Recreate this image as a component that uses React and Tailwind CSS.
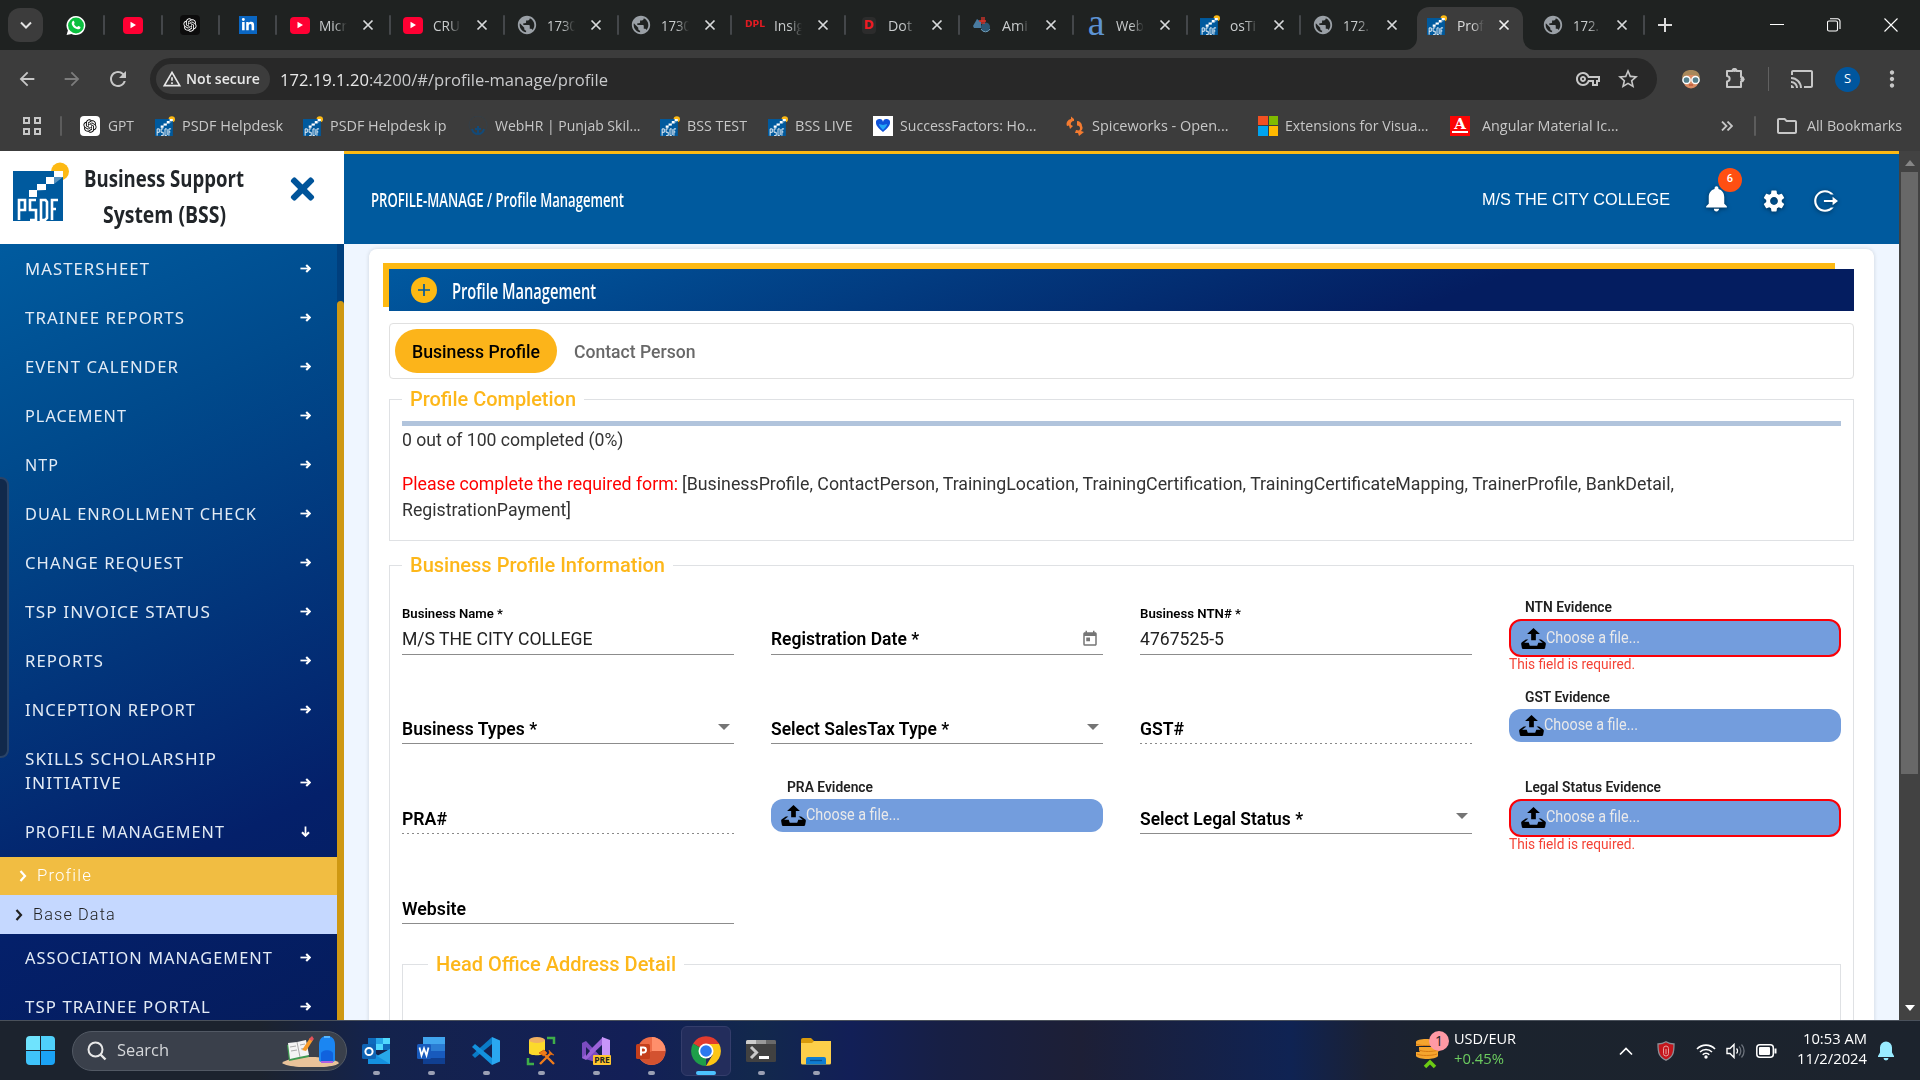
import { useLayoutEffect, useRef } from "react";
import { FaWhatsapp, FaLinkedinIn, FaTimes } from "react-icons/fa";
import {
  MdPublic, MdNotifications, MdSettings, MdToday, MdOutlineExtension, MdCast,
  MdStarOutline, MdOutlineVpnKey, MdMoreVert, MdOutlineFolder, MdRefresh,
  MdArrowBack, MdArrowForward, MdOutlineWarningAmber,
} from "react-icons/md";
import { RiOpenaiFill, RiLogoutCircleRLine } from "react-icons/ri";

/* Text squeezed or stretched horizontally to a given width. */
function Fit({ w, className = "", children }) {
  const inner = useRef(null);
  useLayoutEffect(() => {
    const el = inner.current;
    el.style.transform = "none";
    const natural = el.getBoundingClientRect().width;
    if (natural) el.style.transform = `scaleX(${w / natural})`;
  }, [w]);
  return (
    <span className={"inline-block shrink-0 whitespace-nowrap " + className} style={{ width: w }}>
      <span ref={inner} className="inline-block origin-left">{children}</span>
    </span>
  );
}

function Psdf({ className = "h-5 w-5" }) {
  return (
    <svg viewBox="0 0 56 59" preserveAspectRatio="none" className={"shrink-0 " + className}>
      <circle cx="47" cy="9.5" r="9" fill="#fdb913" />
      <rect x="0" y="9" width="50" height="50" fill="#005a9e" />
      <path d="M41 9h9v6h-9zM33 15h8v7h-8zM24 22h9v6h-9zM16 28h8v7h-8z" fill="#fff" />
      <path d="M50 9v6l-9 7v-7l-8 7v6l-9 1v5l-8 1v-1l8-6v-1l9-5v-2l8-5z" fill="#fff" opacity=".35" />
      <g fill="none" stroke="#fff" strokeWidth="2.6">
        <path d="M6 58V38h6v10H6M23 38h-6v10h6v10h-6M28 58V38h4.500l1.500 2v16l-2 2zM39 58V38h6M39 47h4" />
      </g>
    </svg>
  );
}

function Yt() {
  return (
    <span className="flex h-[17px] w-5 shrink-0 items-center justify-center rounded bg-[#ff0033]">
      <svg viewBox="0 0 8 8" className="h-2 w-2"><path d="M1.500 .8L7 4 1.500 7.200z" fill="#fff" /></svg>
    </span>
  );
}
const Globe = () => <MdPublic className="h-[22px] w-[22px] shrink-0 -ml-px text-[#9aa0a6]" />;
const Dpl = () => (
  <span className="flex h-5 w-5 items-center font-['DejaVu_Sans'] text-[9px] font-bold text-[#e11b22]"><Fit w={20}>DPL</Fit></span>
);
const Dot = () => (
  <span className="flex h-[17px] w-5 items-center justify-center">
    <span className="flex h-[17px] w-3.5 items-center justify-center rounded-sm bg-[#2c2c2c] font-['DejaVu_Sans'] text-[12px] font-bold text-[#f01b23]">D</span>
  </span>
);
const Rig = () => (
  <svg viewBox="0 0 20 20" className="h-5 w-5">
    <path d="M1 11l4-7 4 3v6H2z" fill="#4a7ba0" /><circle cx="13.500" cy="12" r="4.500" fill="#2d5673" />
    <path d="M10 2v7M12 2v7M7 6h7" stroke="#e0352b" strokeWidth="1.300" /><path d="M9 14a5 5 0 009 0" stroke="#6fa0bd" fill="none" />
  </svg>
);
const BlueA = () => (
  <span className="flex h-5 w-5 items-center justify-center pb-[7px] font-['Liberation_Serif'] text-[38px] leading-none text-[#5d93d3]">a</span>
);

function Sep() {
  return <span className="h-5 w-0.5 shrink-0 rounded-sm bg-[#44474a]" />;
}

function Tab({ icon, text, tw, sep = true }) {
  return (
    <div className="flex h-[50px] w-[113.8px] shrink-0 items-center">
      <span className="flex w-[21px] justify-center ml-3">{icon}</span>
      <span className="ml-[9px] flex w-[28px] text-[15px] text-[#c9cccd] [mask-image:linear-gradient(to_right,black_55%,transparent)]"><Fit w={tw}>{text}</Fit></span>
      <X className="ml-[15px] text-[#d8dadb]" />
      <span className="flex-1" />
      {sep && <Sep />}
    </div>
  );
}
function X({ className = "" }) {
  return (
    <svg viewBox="0 0 12 12" className={"h-3 w-3 shrink-0 " + className}>
      <path d="M1.500 1.500l9 9M10.500 1.500l-9 9" stroke="currentColor" strokeWidth="1.700" />
    </svg>
  );
}
function Pinned({ children }) {
  return (
    <div className="flex h-[50px] w-[57.3px] shrink-0 items-center">
      <div className="flex flex-1 justify-center">{children}</div>
      <Sep />
    </div>
  );
}

function TabStrip() {
  return (
    <div className="flex h-[50px] shrink-0 items-center bg-[#1f2221] font-['Open_Sans']">
      <span className="ml-2 flex h-[34px] w-[35px] shrink-0 items-center justify-center rounded-xl bg-[#3c3c3c]">
        <svg viewBox="0 0 12 8" className="h-2 w-3"><path d="M1 1.500l5 5 5-5" fill="none" stroke="#e3e3e3" strokeWidth="2" /></svg>
      </span>
      <div className="ml-[5px] flex items-center">
        <Pinned>
          <svg viewBox="0 0 20 20" className="h-[21px] w-5"><path d="M10 .5a9.500 9.500 0 11-4.600 17.900L.6 19.600l1.300-4.700A9.500 9.500 0 0110 .5z" fill="#fff" /><circle cx="10" cy="10" r="7.900" fill="#0bbf3f" /><path d="M6.800 5.500c.8-.6 1.200 0 1.800 1.700.2.600-.7 1-.6 1.400.6 1.300 1.600 2.300 3 2.900.5.200 1-1.100 1.500-.9 2 .9 2.200 1 1.900 1.900-.5 1.400-2.300 1.600-3.600 1.100-2.700-.9-4.300-2.800-5-4.900-.3-1 .1-2.500 1-3.200z" fill="#fff" /></svg>
        </Pinned>
        <Pinned><Yt /></Pinned>
        <Pinned><span className="flex h-5 w-5 items-center justify-center rounded bg-[#0c0c0c]"><RiOpenaiFill className="h-4 w-4 text-white" /></span></Pinned>
        <Pinned><span className="flex h-[18px] w-[18px] items-center justify-center bg-[#0a66c2]"><FaLinkedinIn className="h-3.5 w-3.5 text-white" /></span></Pinned>
      </div>
      <Tab icon={<Yt />} text="Micr" tw={28} />
      <Tab icon={<Yt />} text="CRU" tw={27} />
      <Tab icon={<Globe />} text="1730" tw={30} />
      <Tab icon={<Globe />} text="1730" tw={30} />
      <Tab icon={<Dpl />} text="Insig" tw={30} />
      <Tab icon={<Dot />} text="Dot" tw={24} />
      <Tab icon={<Rig />} text="Ami" tw={26} />
      <Tab icon={<BlueA />} text="Web" tw={28} />
      <Tab icon={<Psdf />} text="osTi" tw={26} />
      <Tab icon={<Globe />} text="172." tw={26} sep={false} />
      <div className="-ml-[11px] flex h-[50px] w-[134px] shrink-0 items-end">
        <svg viewBox="0 0 12 12" className="ml-[1px] h-3 w-3 shrink-0"><path d="M12 0v12H0A12 12 0 0012 0z" fill="#3c3c3c" /></svg>
        <div className="flex h-[43px] w-[106px] items-center rounded-t-xl bg-[#3c3c3c] pb-[7px] pl-[10px]">
          <Psdf />
          <span className="ml-2.5 flex w-[27px] text-[15px] text-[#dcdcdc] [mask-image:linear-gradient(to_right,black_55%,transparent)]"><Fit w={27}>Prof</Fit></span>
          <X className="ml-[14px] text-[#f0f0f0]" />
        </div>
        <svg viewBox="0 0 12 12" className="h-3 w-3 shrink-0"><path d="M0 0v12h12A12 12 0 010 0z" fill="#3c3c3c" /></svg>
      </div>
      <div className="-ml-[7px]"><Tab icon={<Globe />} text="172." tw={26} /></div>
      <svg viewBox="0 0 14 14" className="ml-[13px] h-3.5 w-3.5 shrink-0"><path d="M7 0v14M0 7h14" stroke="#dcdcdc" strokeWidth="2" /></svg>
      <div className="ml-auto flex items-center gap-[43px] pr-[22px] text-white">
        <svg viewBox="0 0 14 14" className="h-3.5 w-3.5"><path d="M0 6.500h14" stroke="currentColor" strokeWidth="1" /></svg>
        <svg viewBox="0 0 14 14" className="h-3.5 w-3.5"><path d="M.5 4.500a1.500 1.500 0 011.500-1.500h7a1.500 1.500 0 011.500 1.500v7a1.500 1.500 0 01-1.500 1.500H2a1.500 1.500 0 01-1.500-1.500zM3 .8h7.500a2.500 2.500 0 012.500 2.500V11" fill="none" stroke="currentColor" strokeWidth="1.100" /></svg>
        <svg viewBox="0 0 14 14" className="h-3.5 w-3.5"><path d="M.5.5l13 13M13.500.5l-13 13" stroke="currentColor" strokeWidth="1.100" /></svg>
      </div>
    </div>
  );
}

function Toolbar() {
  return (
    <div className="flex h-[58px] shrink-0 items-center bg-[#3c3c3c] font-['Open_Sans'] text-[#c7c7c7]">
      <MdArrowBack className="ml-4 h-[22px] w-[22px] shrink-0" />
      <MdArrowForward className="ml-[23px] h-[22px] w-[22px] shrink-0 text-[#7c7c7c]" />
      <MdRefresh className="ml-[23px] h-6 w-6 shrink-0" />
      <div className="ml-[20px] flex h-[42px] w-[1507px] shrink-0 items-center rounded-full bg-[#282828] pl-1.5">
        <div className="flex h-[30px] w-[114px] items-center rounded-full bg-[#3c3c3c] pl-1.5 text-[15px] font-semibold text-[#e8e8e8]">
          <MdOutlineWarningAmber className="h-5 w-5" />
          <Fit w={74} className="ml-[4px] -mt-px">Not secure</Fit>
        </div>
        <Fit w={328} className="ml-[10px] mt-px text-[17px] text-[#c9cacc]"><span className="text-[#e8e8e8]">172.19.1.20</span>:4200/#/profile-manage/profile</Fit>
        <MdOutlineVpnKey className="ml-auto h-6 w-6" />
        <MdStarOutline className="ml-[16px] mr-[17px] h-6 w-6" />
      </div>
      <svg viewBox="0 0 20 20" className="ml-[24px] h-5 w-5 shrink-0">
        <ellipse cx="10" cy="11" rx="8" ry="8.500" fill="#d98b62" /><path d="M1 10C1 3 5 1 10 1s9 2 9 9c-2-3-4-4-9-4s-7 1-9 4z" fill="#a8885a" />
        <circle cx="5.500" cy="11" r="3.600" fill="#55808c" stroke="#fff" strokeWidth="1.500" /><circle cx="14.500" cy="11" r="3.600" fill="#55808c" stroke="#fff" strokeWidth="1.500" />
        <path d="M8 16h4" stroke="#b0402b" />
      </svg>
      <svg viewBox="0 0 22 22" className="ml-[23px] mt-[-2px] h-[22px] w-[22px] shrink-0"><path d="M3 4h5.500a2 2 0 014 0H17v6a2 2 0 010 4.500V20H3v-5.500c3.500-.5 3.500-5 0-5.500z" fill="none" stroke="#c7c7c7" strokeWidth="2" strokeLinejoin="round" /><circle cx="10.500" cy="3" r="2" fill="#c7c7c7" /><circle cx="18.500" cy="12.200" r="2" fill="#c7c7c7" /></svg>
      <span className="ml-[22px] h-6 w-px shrink-0 bg-[#616161]" />
      <MdCast className="ml-[21px] h-6 w-6 shrink-0" />
      <span className="ml-[21px] flex h-[25px] w-[25px] shrink-0 items-center justify-center rounded-full bg-[#00569e] text-[13px] text-white">S</span>
      <MdMoreVert className="ml-[19px] h-[26px] w-[26px] shrink-0" />
    </div>
  );
}

const Spice = () => (
  <svg viewBox="0 0 20 20" className="h-5 w-5"><path d="M9 3L6 .5V3a5 5 0 00-4 7l2-.5 1 3.500 3-3-2-1a3 3 0 013-4zM12 5a5 5 0 015 5 4 4 0 01-1 5l3 1-5 4-1-3h-3l1-3 3 .5c2-2 1-5-2-5z" fill="#f47b30" /></svg>
);
const bookmarks = [
  ["GPT", 75, 26, "ml-[7.5px]", <span className="flex h-5 w-5 items-center justify-center rounded-sm bg-white"><RiOpenaiFill className="h-4 w-4 text-black" /></span>],
  ["PSDF Helpdesk", 148, 101, "ml-[6.5px]", <Psdf />],
  ["PSDF Helpdesk ip", 165, 116.5, "ml-[6.5px]", <Psdf />],
  ["WebHR | Punjab Skil...", 192, 145.5, "ml-[6.5px]", <svg viewBox="0 0 20 20" className="h-5 w-5"><circle cx="10" cy="9" r="9" fill="none" stroke="#353f47" /><path d="M10 10v8M4 13c1 4 3 5 6 5s5-1 6-5M7 13h6" stroke="#134a78" strokeWidth="2" fill="none" /></svg>],
  ["BSS TEST", 108, 60, "ml-[7px]", <Psdf />],
  ["BSS LIVE", 105, 57.5, "ml-[6.5px]", <Psdf />],
  ["SuccessFactors: Ho...", 192, 136.5, "ml-[6.5px]", <span className="flex h-5 w-5 items-center justify-center bg-white"><svg viewBox="0 0 16 16" className="h-4 w-4"><path d="M8 14C3 10 1 7 1 5a3.500 3.500 0 017-1 3.500 3.500 0 017 1c0 2-2 5-7 9z" fill="#0f52d9" /><path d="M8 12C6 10 4 8 4 6l4 1 4-1c0 2-2 4-4 6z" fill="#25a6f5" /></svg></span>],
  ["Spiceworks - Open...", 193, 136.5, "ml-[6.5px]", <Spice />],
  ["Extensions for Visua...", 192, 143.5, "ml-[6.5px]", <span className="grid h-5 w-5 grid-cols-2 gap-px"><i className="bg-[#f25022]" /><i className="bg-[#7fba00]" /><i className="bg-[#00a4ef]" /><i className="bg-[#ffb900]" /></span>],
  ["Angular Material Ic...", 190, 136.5, "ml-[11.5px]", <span className="flex h-5 w-5 flex-col items-center justify-center bg-[#fb0505] font-['DejaVu_Serif'] text-[15px] font-bold leading-[13px] text-white">A<i className="h-0.5 w-4 bg-white" /></span>],
];

function Bookmarks() {
  return (
    <div className="flex h-[43px] shrink-0 items-center bg-[#3c3c3c] pb-[8px] pt-0 font-['Open_Sans'] text-[14.5px] text-[#c7c7c7]">
      <svg viewBox="0 0 18 18" className="ml-[23px] h-[18px] w-[18px] shrink-0"><path d="M1 1h5v5H1zM12 1h5v5h-5zM1 12h5v5H1zM12 12h5v5h-5z" fill="none" stroke="#c7c7c7" strokeWidth="2" /></svg>
      <span className="ml-[19px] mr-[18px] h-5 w-0.5 shrink-0 rounded bg-[#5c5c5c]" />
      {bookmarks.map(([name, w, tw, gap, icon]) => (
        <div key={name} className="flex shrink-0 items-center" style={{ width: w }}>
          <span className="flex w-5 shrink-0">{icon}</span>
          <Fit w={tw} className={gap}>{name}</Fit>
        </div>
      ))}
      <svg viewBox="0 0 12 10" className="ml-[81px] h-2.5 w-3 shrink-0"><path d="M1 .5L5.500 5 1 9.500M6.500 .5L11 5 6.500 9.500" fill="none" stroke="#c7c7c7" strokeWidth="1.800" /></svg>
      <span className="ml-[21px] h-5 w-0.5 shrink-0 rounded bg-[#5c5c5c]" />
      <MdOutlineFolder className="ml-[19px] h-6 w-6 shrink-0" />
      <Fit w={95} className="ml-[8px]">All Bookmarks</Fit>
    </div>
  );
}

const menuTop = [
  [["MASTERSHEET", 125]], [["TRAINEE REPORTS", 160]], [["EVENT CALENDER", 154]], [["PLACEMENT", 102]], [["NTP", 34]],
  [["DUAL ENROLLMENT CHECK", 232]], [["CHANGE REQUEST", 159]], [["TSP INVOICE STATUS", 186]], [["REPORTS", 79]],
  [["INCEPTION REPORT", 171]], [["SKILLS SCHOLARSHIP", 192], ["INITIATIVE", 97]],
];
const menuBottom = [[["ASSOCIATION MANAGEMENT", 248]], [["TSP TRAINEE PORTAL", 186]]];

function MenuItem({ lines, open }) {
  return (
    <div className="flex items-end justify-between pt-[11.5px] pb-[13.5px] pl-[25px] pr-[26px] font-['Noto_Sans'] text-[15.5px] tracking-[1px] text-[#e3ebf5]">
      <div className="flex flex-col">
        {lines.map(([t, w]) => <Fit key={t} w={w} className="h-6 leading-6">{t}</Fit>)}
      </div>
      <span className="flex h-6 items-center">
        <svg viewBox="0 0 12 12" className={"h-[11px] w-[11px] " + (open ? "rotate-90" : "")}>
          <path d="M.5 6h9" stroke="#fff" strokeWidth="1.900" /><path d="M6.800 2.200L10.600 6 6.800 9.800" fill="none" stroke="#fff" strokeWidth="2.300" />
        </svg>
      </span>
    </div>
  );
}
function Chev() {
  return <svg viewBox="0 0 8 12" className="h-3 w-2 shrink-0"><path d="M1.500 1l4.500 5-4.500 5" fill="none" stroke="currentColor" strokeWidth="2.200" /></svg>;
}

function Sidebar() {
  return (
    <aside className="relative flex h-full w-[344px] shrink-0 flex-col overflow-hidden">
      <div className="flex h-[93px] shrink-0 bg-white">
        <Psdf className="ml-[13px] mt-[11px] h-[59px] w-[56px]" />
        <div className="ml-[15px] mt-[9px] flex w-[160px] flex-col items-center font-['Open_Sans'] text-[24px] font-bold text-[#212529]">
          <Fit w={160} className="h-[35.5px] leading-[35.5px]">Business Support</Fit>
          <Fit w={123} className="h-[35.5px] leading-[35.5px]">System (BSS)</Fit>
        </div>
        <FaTimes className="ml-[42px] mt-[21px] h-[34px] w-[33px] text-[#00549a]" />
      </div>
      <div className="flex min-h-0 flex-1">
        <div className="w-[337px] overflow-hidden bg-[linear-gradient(155deg,#005b9f_0%,#004a8c_25%,#04206a_75%,#051c5c_100%)] pt-px">
          {menuTop.map((l) => <MenuItem key={l[0][0]} lines={l} />)}
          <MenuItem lines={[["PROFILE MANAGEMENT", 200]]} open />
          <div className="flex h-[38px] items-center bg-[#f1bd42] pl-[19px] font-['Roboto'] text-[17px] font-light tracking-[1.2px] text-white">
            <Chev /><Fit w={55} className="ml-[9.5px]">Profile</Fit>
          </div>
          <div className="flex h-[39px] items-center bg-[#c5d8ff] pl-[15px] font-['Roboto'] text-[17px] font-light tracking-[1.2px] text-[#222]">
            <Chev /><Fit w={83} className="ml-[9.5px]">Base Data</Fit>
          </div>
          {menuBottom.map((l) => <MenuItem key={l[0][0]} lines={l} />)}
        </div>
        <div className="w-[7px] bg-[#003f7d] pt-[57px]"><div className="h-full rounded-t bg-[#cf9812]" /></div>
      </div>
      <div className="absolute -left-1 top-[326px] h-[281px] w-[13px] rounded-r-lg border-2 border-[#2a4468] bg-[#11294b]" />
    </aside>
  );
}

function TopBar() {
  return (
    <div className="flex h-[93px] shrink-0 items-center border-t-[3px] border-[#fdb913] bg-[#005a9e] pl-[27px] text-white">
      <Fit w={253} className="mt-[2px] font-['Open_Sans'] text-[20px] font-semibold">PROFILE-MANAGE / Profile Management</Fit>
      <Fit w={188} className="ml-auto mt-[2px] font-['Liberation_Sans'] text-[17px]">M/S THE CITY COLLEGE</Fit>
      <div className="relative ml-[31px]">
        <MdNotifications className="h-[31px] w-[31px] -mt-[2px] drop-shadow-[0_1px_2px_rgba(0,0,0,0.5)]" />
        <span className="absolute left-[17px] -top-[17px] flex h-6 w-6 items-center justify-center rounded-full bg-[#ff4f12] font-['Roboto'] text-[11px] font-medium">6</span>
      </div>
      <MdSettings className="ml-[29px] h-[26px] w-[26px] mt-[4px] drop-shadow-[0_1px_2px_rgba(0,0,0,0.5)]" />
      <RiLogoutCircleRLine className="ml-[25px] mr-[61px] mt-[3px] h-[26px] w-[26px] drop-shadow-[0_1px_2px_rgba(0,0,0,0.5)]" />
    </div>
  );
}

function Field({ label, lw, value, vw, dotted, icon }) {
  return (
    <div className="flex h-full flex-col pt-[15px]">
      <div className="flex h-[17px] items-center text-[13.500px] font-semibold text-black">{value && <Fit w={lw}>{label}</Fit>}</div>
      <div className="flex h-[31.500px] items-center justify-between pt-[2px] text-[18px]">
        {value ? <Fit w={vw} className="text-[#222]">{value}</Fit> : <Fit w={lw} className="font-semibold text-black">{label}</Fit>}
        {icon}
      </div>
      {dotted ? (
        <div className="h-px bg-[repeating-linear-gradient(to_right,#8a8a8a_0,#8a8a8a_2px,transparent_2px,transparent_5px)]" />
      ) : <div className="h-px bg-[#8c8c8c]" />}
    </div>
  );
}
const Caret = () => <span className="mb-1 mr-[4px] border-x-[6.5px] border-t-[6.5px] border-x-transparent border-t-[#757575]" />;

function Upload({ label, lw, error }) {
  return (
    <div className="flex h-full flex-col pt-[8px]">
      <div className="flex h-[21px] items-center pb-px pl-4 text-[14.500px] font-semibold text-[#212121]"><Fit w={lw}>{label}</Fit></div>
      <div className={"flex shrink-0 items-center rounded-xl bg-[#739ddd] text-[16px] text-[#e9e9ea] " + (error ? "h-[38px] border-2 border-[#fb0007] pl-[10px]" : "h-[33px] pl-[10px]")}>
        <svg viewBox="0 0 20 17" className={"h-[21px] w-[25px] " + (error ? "" : "mt-px")} ><path d="M10 0l-5.200 4.900h3.300v5.100h3.800v-5.100h3.300l-5.200-4.900zm9.300 11.500l-3.200-2.100h-2l3.400 2.600h-3.500c-.1 0-.2.1-.2.1l-.8 2.300h-6l-.8-2.200c-.1-.1-.1-.2-.2-.2h-3.600l3.400-2.600h-2l-3.200 2.100c-.4.3-.7 1-.6 1.500l.6 3.100c.1.5.7.9 1.200.9h16.300c.6 0 1.100-.4 1.300-.9l.6-3.100c.1-.5-.2-1.200-.7-1.500z" /></svg>
        <Fit w={94} className="-mt-px">Choose a file...</Fit>
      </div>
      {error && <Fit w={126} className="h-[14px] text-[15px] leading-[14px] text-[#f44336]">This field is required.</Fit>}
    </div>
  );
}

function Group({ title, tw, className = "", legendClass = "", children }) {
  return (
    <fieldset className={"border border-[#dfe1e4] px-[12px] " + className}>
      <legend className={"flex h-[30px] items-center px-2 text-[20.500px] font-medium text-[#fdb71a] " + legendClass}><Fit w={tw} className="pt-px">{title}</Fit></legend>
      {children}
    </fieldset>
  );
}

function Content() {
  return (
    <div className="flex min-h-0 flex-1 overflow-hidden bg-[#eff6ff] pl-[25px] pr-[25px] pt-[5px] font-['Roboto']">
      <div className="h-[900px] flex-1 rounded-lg bg-white px-5 pt-5 shadow-[0_0_4px_rgba(0,0,0,0.14)]">
        <div className="relative z-0 h-[42px]">
          <div className="absolute -left-[6px] -top-[6px] -z-10 h-[44px] w-[1452px] rounded-br-lg bg-[#fdb913]" />
          <div className="flex h-[42px] items-center bg-[linear-gradient(160deg,#0059a0_0%,#041d60_72%)] pl-[22px]">
            <span className="-mt-px flex h-[26px] w-[26px] items-center justify-center rounded-full bg-[#fdb913]">
              <svg viewBox="0 0 12 12" className="h-3 w-3"><path d="M6 0v12M0 6h12" stroke="#005a9e" strokeWidth="1.700" /></svg>
            </span>
            <Fit w={144} className="ml-[15px] font-['Open_Sans'] text-[22px] font-semibold text-white">Profile Management</Fit>
          </div>
        </div>
        <div className="mt-[12px] flex h-[56px] items-center rounded border border-[#e0e0e0] pl-[5px] text-[18px] font-medium">
          <span className="flex h-11 w-[162px] items-center justify-center rounded-full bg-[#fcb41a] text-black"><Fit w={128} className="pt-px">Business Profile</Fit></span>
          <Fit w={121.5} className="ml-[17px] pt-px text-[#686868]">Contact Person</Fit>
        </div>
        <Group title="Profile Completion" tw={166} className="mt-[5px] h-[157px]">
          <div className="mt-[7px] h-[5px] bg-[#b1c4dc]" />
          <div className="pt-px text-[18px] leading-[26px] font-[450] text-[#333]">
            <div className="h-[26px]"><Fit w={221.5}>0 out of 100 completed (0%)</Fit></div>
            <div className="mt-[17.500px] flex h-[26px]">
              <Fit w={276} className="text-[#f00]">Please complete the required form:</Fit>
              <Fit w={992} className="ml-[4px]">[BusinessProfile, ContactPerson, TrainingLocation, TrainingCertification, TrainingCertificateMapping, TrainerProfile, BankDetail,</Fit>
            </div>
            <Fit w={169} className="h-[26px]">RegistrationPayment]</Fit>
          </div>
        </Group>
        <Group title="Business Profile Information" tw={255} className="mt-[9px] h-[600px]">
          <div className="mt-[10px] grid auto-rows-[89.75px] grid-cols-4 gap-x-[37px]">
            <Field label="Business Name *" lw={101} value="M/S THE CITY COLLEGE" vw={190.5} />
            <Field label="Registration Date *" lw={148} icon={<MdToday className="mr-[4px] h-[18px] w-[18px] text-[#757575]" />} />
            <Field label="Business NTN# *" lw={101} value="4767525-5" vw={84} />
            <Upload label="NTN Evidence" lw={87} error />
            <Field label="Business Types *" lw={135} icon={<Caret />} />
            <Field label="Select SalesTax Type *" lw={178} icon={<Caret />} />
            <Field label="GST#" lw={44} dotted />
            <Upload label="GST Evidence" lw={85} />
            <Field label="PRA#" lw={45} dotted />
            <Upload label="PRA Evidence" lw={86} />
            <Field label="Select Legal Status *" lw={163} icon={<Caret />} />
            <Upload label="Legal Status Evidence" lw={136} error />
            <Field label="Website" lw={64} />
          </div>
          <Group title="Head Office Address Detail" tw={240} className="h-[200px]" legendClass="ml-[13px]" />
        </Group>
      </div>
    </div>
  );
}

function PageScroll() {
  return (
    <div className="flex w-[21px] shrink-0 flex-col items-center bg-[#424242]">
      <span className="mt-[9px] border-x-[5px] border-b-[6px] border-x-transparent border-b-[#868686]" />
      <span className="mt-[6px] h-[602px] w-[17px] bg-[#686868]" />
      <span className="mb-[9px] mt-auto border-x-[5px] border-t-[6px] border-x-transparent border-t-white" />
    </div>
  );
}

const ic = "h-[30px] w-[30px]";
const apps = [
  <svg viewBox="0 0 30 30" className={ic}><path d="M7 2h22v12H7z" fill="#0f6cbd" /><path d="M15 2h7v6h-7z" fill="#28a8ea" /><path d="M22 2h7v6h-7zM15 8h7v6h-7z" fill="#50d9ff" /><path d="M7 13l11 7 11-7v15H7z" fill="#1490df" /><path d="M29 13v15L16 20z" fill="#28a8ea" /><rect x="1" y="8" width="14" height="15" rx="1.500" fill="#0f64b5" /><circle cx="8" cy="15.500" r="3.600" fill="none" stroke="#fff" strokeWidth="2" /></svg>,
  <svg viewBox="0 0 30 30" className={ic}><path d="M7 1h22v7H7z" fill="#41a5ee" /><path d="M7 8h22v7H7z" fill="#2b7cd3" /><path d="M7 15h22v7H7z" fill="#185abd" /><path d="M7 22h22v6H7z" fill="#103f91" /><rect x="1" y="8" width="14" height="15" rx="1.500" fill="#185abd" /><path d="M3.500 11.500l2 8 2.500-7 2.500 7 2-8" fill="none" stroke="#fff" strokeWidth="1.800" /></svg>,
  <svg viewBox="0 0 30 30" className={ic}><path d="M21 1l8 3.500v21L21 29z" fill="#2aa7f0" /><path d="M21 1v7L4 22l-3-3z" fill="#0a7bc7" /><path d="M21 29v-7L4 8l-3 3z" fill="#1391dd" /></svg>,
  <svg viewBox="0 0 30 30" className={ic}><path d="M3 4v13c0 3 16 3 16 0V4z" fill="#fcd92b" /><ellipse cx="11" cy="4" rx="8" ry="3" fill="#f0b061" /><path d="M21 2h7v6M2 22v6h6" fill="none" stroke="#3fae49" strokeWidth="2.500" /><path d="M14 28l11-11M18 18l10 10" stroke="#f07c1b" strokeWidth="2.400" /><path d="M13 17l5-3 3 3-3 3zM23 14l1 4 4 1" fill="#f07c1b" stroke="#d96510" /></svg>,
  <svg viewBox="0 0 30 30" className={ic}><path d="M1 7l4-2 16 17v6L1 22z" fill="#7b4cc0" /><path d="M1 22l4 2L22 8V1z" fill="#9a62d8" /><path d="M21 1l8 3v21l-8 4z" fill="#c896fa" /><path d="M5 11v9l4-5z" fill="#1a2052" /><rect x="12" y="19" width="18" height="10" rx="1" fill="#ffc62f" /><text x="21" y="27.300" textAnchor="middle" fontSize="8.500" fontWeight="700" fontFamily="Open Sans" fill="#222">PRE</text></svg>,
  <svg viewBox="0 0 30 30" className={ic}><circle cx="15.500" cy="15" r="14" fill="#ed6c47" /><path d="M16 1a14 14 0 0113.500 14H16z" fill="#ff8f6b" /><path d="M29.500 15a14 14 0 01-26 7l12.500-7z" fill="#d35230" /><rect x="0" y="8" width="14" height="15" rx="1.500" fill="#c43e1c" /><path d="M5 19.500v-8h2.500a2.500 2.500 0 010 5H5" fill="none" stroke="#fff" strokeWidth="1.900" /></svg>,
  <svg viewBox="0 0 30 30" className={ic}><path d="M15 15L2.100 7.500A15 15 0 0127.900 7.500z" fill="#e33b2e" /><path d="M15 15V30A15 15 0 012.100 7.500z" fill="#1e9e49" /><path d="M15 7.500h12.900A15 15 0 0115 30l6.500-11z" fill="#fdc615" /><path d="M15 7.500h13" stroke="#e33b2e" /><circle cx="15" cy="15" r="7.500" fill="#fff" /><circle cx="15" cy="15" r="5.800" fill="#2b78f0" /></svg>,
  <svg viewBox="0 0 30 30" className={ic}><rect y="4" width="30" height="22" rx="1.500" fill="#414141" /><path d="M0 5.500A1.500 1.500 0 011.500 4H10v4H0z" fill="#ccc" /><path d="M10 4h10v4H10z" fill="#999" /><path d="M20 4h8.500A1.500 1.500 0 0130 5.500V8H20z" fill="#6a6a6a" /><path d="M5 11l5.500 5.500L5 22" fill="none" stroke="#c9c9c9" strokeWidth="3" /><path d="M13 20h10v3H13z" fill="#fff" /></svg>,
  <svg viewBox="0 0 30 30" className={ic}><path d="M0 4a2 2 0 012-2h8l3 3v4H0z" fill="#d89a0c" /><path d="M0 7h11l2-2h17v22a1.500 1.500 0 01-1.500 1.500h-27A1.500 1.500 0 010 27z" fill="#fdcf4a" /><path d="M5 28.500V23a2 2 0 012-2h16a2 2 0 012 2v5.500z" fill="#0f7dd2" /><path d="M9 24.500h12" stroke="#074f93" strokeWidth="1.300" /></svg>,
];

function Taskbar() {
  return (
    <div className="flex h-[60px] shrink-0 items-center border-t border-[#4a515b] bg-[linear-gradient(to_right,#1c232e_0,#1c232e_260px,#14234c_370px,#131f57_630px,#12284c_760px,#121f57_850px,#171f45_940px,#1d1f36_1080px,#12224e_1250px,#0f2353_1290px,#1b2133_1370px,#1b232e_1430px,#1c232d_100%)] font-['Open_Sans'] text-white">
      <span className="ml-[26px] grid h-[29px] w-[29px] shrink-0 grid-cols-2 gap-px"><i className="rounded-tl-sm bg-[#6fe3fd]" /><i className="rounded-tr-sm bg-[#4fd0fb]" /><i className="rounded-bl-sm bg-[#3fc3fa]" /><i className="rounded-br-sm bg-[#1ba3f5]" /></span>
      <div className="ml-[17px] flex h-10 w-[275px] shrink-0 items-center rounded-full border border-[#525964] bg-[#3a404b] pl-[14px]">
        <svg viewBox="0 0 20 20" className="h-5 w-5"><circle cx="8.500" cy="8.500" r="7" fill="none" stroke="#e8e8e8" strokeWidth="2" /><path d="M13.500 13.500l5 5" stroke="#e8e8e8" strokeWidth="2.400" /></svg>
        <Fit w={52} className="ml-[10px] text-[16.500px] text-[#d5d7da]">Search</Fit>
        <svg viewBox="0 0 58 32" className="ml-auto mr-[6px] h-8 w-[58px]">
          <path d="M0 28c8-8 50-8 57 0-4 6-50 6-57 0z" fill="#e9c39a" /><path d="M5 10l18-4 4 16-20 4z" fill="#3f9a50" /><path d="M6 8l9-1 9-2 3 15-10 2-9 2z" fill="#f4f4f4" /><path d="M15 7l3 15M8 12l6-1M9 16l6-1M18 10l5-1M19 14l5-1" stroke="#aaa" /><path d="M20 15l8-12 3 2-7 11z" fill="#f79b2a" /><path d="M27 4l3-3 2 3-2 2z" fill="#e4525a" />
          <path d="M37 25V10c0-6 3-9 8-9s8 3 8 9v15c0 4-16 4-16 0z" fill="#1b86f2" /><path d="M39 19c0-5 12-5 12 0v7H39z" fill="#1062de" /><path d="M42 2h6" stroke="#58b7ff" strokeWidth="2" /><path d="M39 27h12" stroke="#b05fe0" strokeWidth="2" />
        </svg>
      </div>
      <div className="ml-[1.5px] flex h-[59px] items-center">
        {apps.map((a, i) => (
          <div key={i} className="flex w-[55px] shrink-0 justify-center">
            <div className={"flex h-[50px] w-[50px] flex-col items-center rounded-md pt-[9px] " + (i === 6 ? "border border-[#343d6b] bg-[#232d5c]" : "border border-transparent")}>
              {a}
              <span className={"mt-[5px] h-1 shrink-0 rounded-full " + (i === 6 ? "w-5 bg-[#4cc2ff]" : "w-[7px] bg-[#9ba0b4]")} />
            </div>
          </div>
        ))}
      </div>
      <div className="ml-auto flex shrink-0 items-center">
        <svg viewBox="0 0 36 40" className="h-10 w-9 shrink-0">
          <path d="M2 11c0-4 20-4 20 0v4H2zM5 16h20v4c-2 3-18 3-20 0zM2 21h22v4c-2 4-20 4-22 0z" fill="#f5a52e" /><path d="M2 13c4 2 14 2 19 0M5 19c5 2 13 2 20 0M3 23c4 2 14 2 20 0" stroke="#d87a12" fill="none" />
          <path d="M11 36l5-5 5 5" fill="none" stroke="#6ccb14" strokeWidth="3.500" /><circle cx="25" cy="10" r="10" fill="#ff99a4" /><text x="25" y="15" textAnchor="middle" fontSize="14" fontFamily="Open Sans" fill="#222">1</text>
        </svg>
        <div className="-mt-[3px] ml-[4px] flex w-[165px] flex-col text-[14.500px] leading-5">
          <Fit w={62} className="h-5">USD/EUR</Fit>
          <Fit w={50} className="h-5 text-[#6ccb5f]">+0.45%</Fit>
        </div>
        <svg viewBox="0 0 14 10" className="h-2.5 w-3.5"><path d="M1 8.500l6-6 6 6" fill="none" stroke="#fff" strokeWidth="1.700" /></svg>
        <svg viewBox="0 0 18 20" className="ml-[24px] h-5 w-[18px]"><path d="M9 .8c3 2 5 2.200 8 2.200 0 9-1 13-8 16.200C2 16 1 12 1 3c3 0 5-.2 8-2.200z" fill="#c4161c" stroke="#8b8f96" strokeWidth="1.300" /><rect x="6.500" y="5" width="5" height="10" rx="2.500" fill="none" stroke="#e9a0a0" /><path d="M9 8v5" stroke="#e9a0a0" /></svg>
        <svg viewBox="0 0 20 16" className="ml-[21px] h-4 w-5"><path d="M1 6a12.500 12.500 0 0118 0M4 9a8.500 8.500 0 0112 0M6.700 11.700a4.700 4.700 0 016.600 0" fill="none" stroke="#fff" strokeWidth="1.600" /><circle cx="10" cy="14" r="1.700" fill="#fff" /></svg>
        <svg viewBox="0 0 20 16" className="ml-[10px] h-4 w-5"><path d="M1 5.500h3l4-4v13l-4-4H1z" fill="none" stroke="#fff" strokeWidth="1.400" /><path d="M10.500 5.500a3.500 3.500 0 010 5" stroke="#fff" strokeWidth="1.300" fill="none" /><path d="M13 3.500a6.500 6.500 0 010 9M15.500 1.500a9.500 9.500 0 010 13" stroke="#6c727b" strokeWidth="1.300" fill="none" /></svg>
        <svg viewBox="0 0 21 14" className="ml-[10px] h-3.5 w-[21px]"><rect x=".8" y=".8" width="16.500" height="12.400" rx="3" fill="none" stroke="#fff" strokeWidth="1.500" /><rect x="3" y="3" width="11" height="8" rx="1" fill="#fff" /><path d="M19.500 4.500v5" stroke="#fff" strokeWidth="2" /></svg>
        <div className="-mt-[3px] ml-[20px] flex w-[70px] flex-col items-end text-[14.500px] leading-5">
          <Fit w={64} className="h-5">10:53 AM</Fit>
          <Fit w={70} className="h-5">11/2/2024</Fit>
        </div>
        <svg viewBox="0 0 18 20" className="ml-[10px] mr-[25px] h-5 w-[18px]"><path d="M9 .5a6 6 0 016 6v5l2 3.500v1H1v-1l2-3.500v-5a6 6 0 016-6zM6.500 17h5a2.500 2.500 0 01-5 0z" fill="#99ebff" /></svg>
      </div>
    </div>
  );
}

export default function App() {
  return (
    <div className="flex h-[1080px] w-[1920px] flex-col overflow-hidden bg-[#3c3c3c]">
      <TabStrip />
      <Toolbar />
      <Bookmarks />
      <div className="flex h-[869px] shrink-0">
        <Sidebar />
        <main className="flex min-w-0 flex-1 flex-col">
          <TopBar />
          <Content />
        </main>
        <PageScroll />
      </div>
      <Taskbar />
    </div>
  );
}
